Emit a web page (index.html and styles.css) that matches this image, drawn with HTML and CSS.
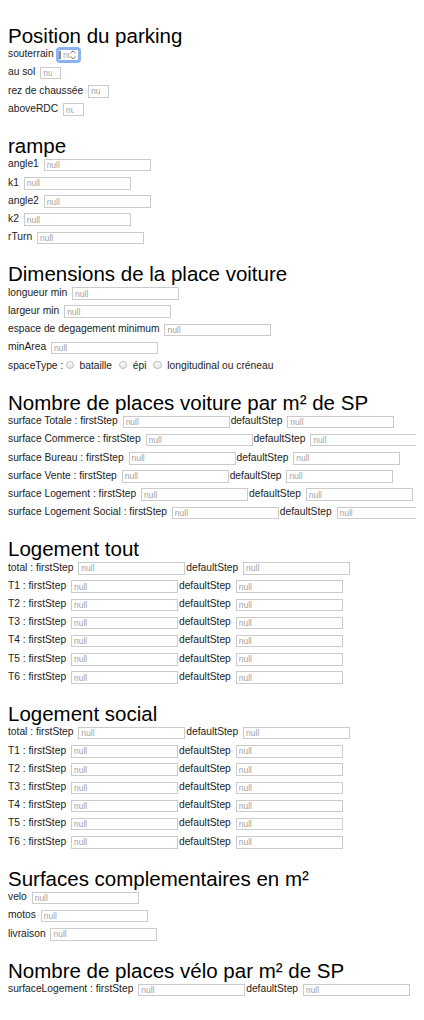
FILE: index.html
```html
<!DOCTYPE html>
<html lang="fr">
<head>
<meta charset="utf-8">
<title>Parking</title>
<link rel="stylesheet" href="styles.css">
</head>
<body>
<section class="section">
  <h1>Position du parking</h1>
  <div class="rows">
    <div class="row"><label class="field">souterrain<span class="num-wrap"><input class="inp num focus" type="text" placeholder="null"><svg class="spin" width="21" height="12" viewBox="0 0 21 12"><line x1="2" y1="2" x2="2" y2="10" stroke="#000" stroke-width="0.9"/><path d="M12.6 4.2 L15 1.8 L17.4 4.2" fill="none" stroke="#5a5a5a" stroke-width="0.9"/><path d="M12.6 7.4 L15 9.8 L17.4 7.4" fill="none" stroke="#5a5a5a" stroke-width="0.9"/></svg></span></label></div>
    <div class="row"><label class="field">au sol<input class="inp num" type="text" placeholder="null"></label></div>
    <div class="row"><label class="field">rez de chaussée<input class="inp num" type="text" placeholder="null"></label></div>
    <div class="row"><label class="field">aboveRDC<input class="inp num" type="text" placeholder="null"></label></div>
  </div>
</section>

<section class="section">
  <h1>rampe</h1>
  <div class="rows">
    <div class="row"><label class="field">angle1<input class="inp" type="text" placeholder="null"></label></div>
    <div class="row"><label class="field">k1<input class="inp" type="text" placeholder="null"></label></div>
    <div class="row"><label class="field">angle2<input class="inp" type="text" placeholder="null"></label></div>
    <div class="row"><label class="field">k2<input class="inp" type="text" placeholder="null"></label></div>
    <div class="row"><label class="field">rTurn<input class="inp" type="text" placeholder="null"></label></div>
  </div>
</section>

<section class="section">
  <h1>Dimensions de la place voiture</h1>
  <div class="rows">
    <div class="row"><label class="field">longueur min<input class="inp" type="text" placeholder="null"></label></div>
    <div class="row"><label class="field">largeur min<input class="inp" type="text" placeholder="null"></label></div>
    <div class="row"><label class="field">espace de degagement minimum<input class="inp" type="text" placeholder="null"></label></div>
    <div class="row"><label class="field">minArea<input class="inp" type="text" placeholder="null"></label></div>
    <div class="row">
      <span class="field">spaceType :</span>
      <label class="opt"><input class="radio" type="radio" name="spaceType">bataille</label>
      <label class="opt"><input class="radio" type="radio" name="spaceType">épi</label>
      <label class="opt"><input class="radio" type="radio" name="spaceType">longitudinal ou créneau</label>
    </div>
  </div>
</section>

<section class="section">
  <h1>Nombre de places voiture par m² de SP</h1>
  <div class="rows">
    <div class="row"><label class="field">surface Totale : firstStep<input class="inp" type="text" placeholder="null"></label><label class="field">defaultStep<input class="inp" type="text" placeholder="null"></label></div>
    <div class="row"><label class="field">surface Commerce : firstStep<input class="inp" type="text" placeholder="null"></label><label class="field">defaultStep<input class="inp" type="text" placeholder="null"></label></div>
    <div class="row"><label class="field">surface Bureau : firstStep<input class="inp" type="text" placeholder="null"></label><label class="field">defaultStep<input class="inp" type="text" placeholder="null"></label></div>
    <div class="row"><label class="field">surface Vente : firstStep<input class="inp" type="text" placeholder="null"></label><label class="field">defaultStep<input class="inp" type="text" placeholder="null"></label></div>
    <div class="row"><label class="field">surface Logement : firstStep<input class="inp" type="text" placeholder="null"></label><label class="field">defaultStep<input class="inp" type="text" placeholder="null"></label></div>
    <div class="row"><label class="field">surface Logement Social : firstStep<input class="inp" type="text" placeholder="null"></label><label class="field">defaultStep<input class="inp" type="text" placeholder="null"></label></div>
  </div>
</section>

<section class="section">
  <h1>Logement tout</h1>
  <div class="rows">
    <div class="row"><label class="field">total : firstStep<input class="inp" type="text" placeholder="null"></label><label class="field">defaultStep<input class="inp" type="text" placeholder="null"></label></div>
    <div class="row"><label class="field">T1 : firstStep<input class="inp" type="text" placeholder="null"></label><label class="field">defaultStep<input class="inp" type="text" placeholder="null"></label></div>
    <div class="row"><label class="field">T2 : firstStep<input class="inp" type="text" placeholder="null"></label><label class="field">defaultStep<input class="inp" type="text" placeholder="null"></label></div>
    <div class="row"><label class="field">T3 : firstStep<input class="inp" type="text" placeholder="null"></label><label class="field">defaultStep<input class="inp" type="text" placeholder="null"></label></div>
    <div class="row"><label class="field">T4 : firstStep<input class="inp" type="text" placeholder="null"></label><label class="field">defaultStep<input class="inp" type="text" placeholder="null"></label></div>
    <div class="row"><label class="field">T5 : firstStep<input class="inp" type="text" placeholder="null"></label><label class="field">defaultStep<input class="inp" type="text" placeholder="null"></label></div>
    <div class="row"><label class="field">T6 : firstStep<input class="inp" type="text" placeholder="null"></label><label class="field">defaultStep<input class="inp" type="text" placeholder="null"></label></div>
  </div>
</section>

<section class="section">
  <h1>Logement social</h1>
  <div class="rows marked">
    <span class="mark"></span>
    <div class="row"><label class="field">total : firstStep<input class="inp" type="text" placeholder="null"></label><label class="field">defaultStep<input class="inp" type="text" placeholder="null"></label></div>
    <div class="row"><label class="field">T1 : firstStep<input class="inp" type="text" placeholder="null"></label><label class="field">defaultStep<input class="inp" type="text" placeholder="null"></label></div>
    <div class="row"><label class="field">T2 : firstStep<input class="inp" type="text" placeholder="null"></label><label class="field">defaultStep<input class="inp" type="text" placeholder="null"></label></div>
    <div class="row"><label class="field">T3 : firstStep<input class="inp" type="text" placeholder="null"></label><label class="field">defaultStep<input class="inp" type="text" placeholder="null"></label></div>
    <div class="row"><label class="field">T4 : firstStep<input class="inp" type="text" placeholder="null"></label><label class="field">defaultStep<input class="inp" type="text" placeholder="null"></label></div>
    <div class="row"><label class="field">T5 : firstStep<input class="inp" type="text" placeholder="null"></label><label class="field">defaultStep<input class="inp" type="text" placeholder="null"></label></div>
    <div class="row"><label class="field">T6 : firstStep<input class="inp" type="text" placeholder="null"></label><label class="field">defaultStep<input class="inp" type="text" placeholder="null"></label></div>
  </div>
</section>

<section class="section">
  <h1>Surfaces complementaires en m²</h1>
  <div class="rows">
    <div class="row"><label class="field">velo<input class="inp" type="text" placeholder="null"></label></div>
    <div class="row"><label class="field">motos<input class="inp" type="text" placeholder="null"></label></div>
    <div class="row"><label class="field">livraison<input class="inp" type="text" placeholder="null"></label></div>
  </div>
</section>

<section class="section">
  <h1>Nombre de places vélo par m² de SP</h1>
  <div class="rows">
    <div class="row"><label class="field">surfaceLogement : firstStep<input class="inp" type="text" placeholder="null"></label><label class="field">defaultStep<input class="inp" type="text" placeholder="null"></label></div>
  </div>
</section>
</body>
</html>
```

FILE: styles.css
```css
html {
  overflow: hidden;
  background: #fff;
}

body {
  margin: 8px;
  font-family: "Liberation Sans", Arial, sans-serif;
  font-size: 10.25px;
  color: #1c1c1c;
  background: #fff;
}

.section {
  margin-top: 18.6px;
}

.section + .section {
  margin-top: 19.45px;
}

h1 {
  margin: 0;
  font-size: 20.5px;
  line-height: 18px;
  font-weight: normal;
  color: #000;
  white-space: nowrap;
}

.rows {
  display: flex;
  flex-direction: column;
}

.rows.marked {
  position: relative;
}

.mark {
  position: absolute;
  left: -1.6px;
  top: 7.8px;
  width: 2px;
  height: 45px;
  background: #6aafe0;
}

.row {
  display: flex;
  align-items: center;
  height: 18.2px;
  white-space: nowrap;
}

.field {
  display: flex;
  align-items: center;
  flex: none;
}

.inp {
  box-sizing: border-box;
  flex: none;
  width: 107px;
  height: 12.5px;
  margin: 2.5px 1px 0 4.85px;
  padding: 0 0 0 2px;
  border: 1px solid #cbcbcb;
  border-radius: 0;
  font: 8.5px "Liberation Sans", Arial, sans-serif;
  color: #000;
  background: #fff;
  outline: none;
}

.inp::placeholder {
  color: #a3a3a3;
  opacity: 1;
}

.inp.num {
  width: 21px;
  padding-right: 8.5px;
}

.num-wrap {
  position: relative;
  display: flex;
  flex: none;
}

.inp.focus {
  border-color: #8fb3e6;
  border-radius: 2px;
  box-shadow: 0 0 0 2px rgba(110, 160, 236, 0.8);
  padding-left: 3.5px;
}

.spin {
  position: absolute;
  left: 4.85px;
  top: 2.75px;
}

.opt {
  display: flex;
  align-items: center;
  flex: none;
  margin-right: 4.5px;
}

.radio {
  appearance: none;
  -webkit-appearance: none;
  box-sizing: border-box;
  flex: none;
  width: 8.5px;
  height: 8.5px;
  margin: 0 5.5px 0 2.3px;
  border: 1px solid #bdbdbd;
  border-radius: 50%;
  background: linear-gradient(#fdfdfd, #e4e4e4);
}
```
